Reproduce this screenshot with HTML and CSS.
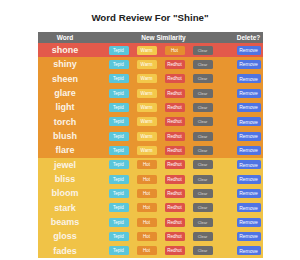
FILE: index.html
```html
<!DOCTYPE html>
<html lang="en">
<head>
    <meta charset="UTF-8">
    <meta name="viewport" content="width=device-width, initial-scale=1.0">
    <title>Word Review</title>
    <link rel="stylesheet" href="styles.css">
</head>
<body>
    <h1>Word Review For "Shine"</h1>

    <div class="review">
        <div class="row head">
            <span>Word</span>
            <span>New Similarity</span>
            <span>Delete?</span>
        </div>

        <!-- redhot -->
        <div class="row redhot">
            <span class="word">shone</span>
            <div class="levels">
                <button class="btn tepid">Tepid</button>
                <button class="btn warm">Warm</button>
                <button class="btn hot">Hot</button>
                <button class="btn clear">Clear</button>
            </div>
            <div class="del"><button class="btn remove">Remove</button></div>
        </div>

        <!-- hot -->
        <div class="row hot-row">
            <span class="word">shiny</span>
            <div class="levels">
                <button class="btn tepid">Tepid</button>
                <button class="btn warm">Warm</button>
                <button class="btn red">Redhot</button>
                <button class="btn clear">Clear</button>
            </div>
            <div class="del"><button class="btn remove">Remove</button></div>
        </div>
        <div class="row hot-row">
            <span class="word">sheen</span>
            <div class="levels">
                <button class="btn tepid">Tepid</button>
                <button class="btn warm">Warm</button>
                <button class="btn red">Redhot</button>
                <button class="btn clear">Clear</button>
            </div>
            <div class="del"><button class="btn remove">Remove</button></div>
        </div>
        <div class="row hot-row">
            <span class="word">glare</span>
            <div class="levels">
                <button class="btn tepid">Tepid</button>
                <button class="btn warm">Warm</button>
                <button class="btn red">Redhot</button>
                <button class="btn clear">Clear</button>
            </div>
            <div class="del"><button class="btn remove">Remove</button></div>
        </div>
        <div class="row hot-row">
            <span class="word">light</span>
            <div class="levels">
                <button class="btn tepid">Tepid</button>
                <button class="btn warm">Warm</button>
                <button class="btn red">Redhot</button>
                <button class="btn clear">Clear</button>
            </div>
            <div class="del"><button class="btn remove">Remove</button></div>
        </div>
        <div class="row hot-row">
            <span class="word">torch</span>
            <div class="levels">
                <button class="btn tepid">Tepid</button>
                <button class="btn warm">Warm</button>
                <button class="btn red">Redhot</button>
                <button class="btn clear">Clear</button>
            </div>
            <div class="del"><button class="btn remove">Remove</button></div>
        </div>
        <div class="row hot-row">
            <span class="word">blush</span>
            <div class="levels">
                <button class="btn tepid">Tepid</button>
                <button class="btn warm">Warm</button>
                <button class="btn red">Redhot</button>
                <button class="btn clear">Clear</button>
            </div>
            <div class="del"><button class="btn remove">Remove</button></div>
        </div>
        <div class="row hot-row">
            <span class="word">flare</span>
            <div class="levels">
                <button class="btn tepid">Tepid</button>
                <button class="btn warm">Warm</button>
                <button class="btn red">Redhot</button>
                <button class="btn clear">Clear</button>
            </div>
            <div class="del"><button class="btn remove">Remove</button></div>
        </div>

        <!-- warm -->
        <div class="row warm-row">
            <span class="word">jewel</span>
            <div class="levels">
                <button class="btn tepid">Tepid</button>
                <button class="btn hot">Hot</button>
                <button class="btn red">Redhot</button>
                <button class="btn clear">Clear</button>
            </div>
            <div class="del"><button class="btn remove">Remove</button></div>
        </div>
        <div class="row warm-row">
            <span class="word">bliss</span>
            <div class="levels">
                <button class="btn tepid">Tepid</button>
                <button class="btn hot">Hot</button>
                <button class="btn red">Redhot</button>
                <button class="btn clear">Clear</button>
            </div>
            <div class="del"><button class="btn remove">Remove</button></div>
        </div>
        <div class="row warm-row">
            <span class="word">bloom</span>
            <div class="levels">
                <button class="btn tepid">Tepid</button>
                <button class="btn hot">Hot</button>
                <button class="btn red">Redhot</button>
                <button class="btn clear">Clear</button>
            </div>
            <div class="del"><button class="btn remove">Remove</button></div>
        </div>
        <div class="row warm-row">
            <span class="word">stark</span>
            <div class="levels">
                <button class="btn tepid">Tepid</button>
                <button class="btn hot">Hot</button>
                <button class="btn red">Redhot</button>
                <button class="btn clear">Clear</button>
            </div>
            <div class="del"><button class="btn remove">Remove</button></div>
        </div>
        <div class="row warm-row">
            <span class="word">beams</span>
            <div class="levels">
                <button class="btn tepid">Tepid</button>
                <button class="btn hot">Hot</button>
                <button class="btn red">Redhot</button>
                <button class="btn clear">Clear</button>
            </div>
            <div class="del"><button class="btn remove">Remove</button></div>
        </div>
        <div class="row warm-row">
            <span class="word">gloss</span>
            <div class="levels">
                <button class="btn tepid">Tepid</button>
                <button class="btn hot">Hot</button>
                <button class="btn red">Redhot</button>
                <button class="btn clear">Clear</button>
            </div>
            <div class="del"><button class="btn remove">Remove</button></div>
        </div>
        <div class="row warm-row">
            <span class="word">fades</span>
            <div class="levels">
                <button class="btn tepid">Tepid</button>
                <button class="btn hot">Hot</button>
                <button class="btn red">Redhot</button>
                <button class="btn clear">Clear</button>
            </div>
            <div class="del"><button class="btn remove">Remove</button></div>
        </div>
    </div>
</body>
</html>
```

FILE: styles.css
```css
* {
    margin: 0;
    padding: 0;
    box-sizing: border-box;
}

body {
    font-family: "Liberation Sans", Arial, sans-serif;
    background-color: #fff;
    color: #222;
}

h1 {
    font-size: 9.7px;
    font-weight: bold;
    text-align: center;
    padding-top: 12px;
    height: 32px;
    line-height: 12px;
}

.review {
    width: 225px;
    margin: 0 auto;
}

.row {
    display: grid;
    grid-template-columns: 55px 142px 28px;
    align-items: center;
    text-align: center;
    height: 14.33px;
}

.row.head {
    height: 11px;
    background-color: #6e6e6e;
    color: #fff;
    font-size: 6.5px;
    font-weight: bold;
}

.redhot {
    background-color: #e35a4b;
}

.hot-row {
    background-color: #e8952f;
}

.warm-row {
    background-color: #f0c347;
}

.word {
    font-size: 9px;
    font-weight: bold;
    color: #fbf3e6;
}

.levels {
    display: flex;
    justify-content: center;
    gap: 8px;
    padding-right: 6px;
}

.del {
    display: flex;
    justify-content: center;
}

/* 按钮 */
.btn {
    border: none;
    border-radius: 1.5px;
    height: 9px;
    width: 20px;
    font-family: "Liberation Sans", Arial, sans-serif;
    font-size: 4.5px;
    color: #fff;
    display: inline-flex;
    align-items: center;
    justify-content: center;
}

.tepid {
    background-color: #5ac6da;
}

.warm {
    background-color: #f3c84b;
}

.hot {
    background-color: #e58d2f;
}

.red {
    background-color: #dd5149;
}

.clear {
    background-color: #6a6a6a;
    color: #ddd;
    font-size: 4px;
}

.remove {
    background-color: #4f74e3;
    width: 24px;
    flex-shrink: 0;
    font-size: 5px;
}
```
